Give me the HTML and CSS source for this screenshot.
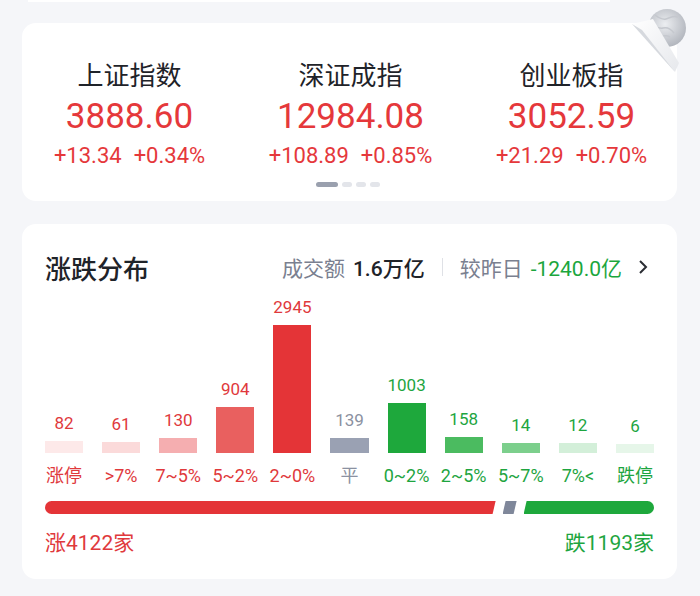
FILE: index.html
```html
<!DOCTYPE html>
<html lang="zh-CN">
<head>
    <meta charset="UTF-8">
    <meta name="viewport" content="width=device-width, initial-scale=1.0">
    <title>行情</title>
    <link rel="stylesheet" href="styles.css">
</head>
<body>
    <div class="top-strip"></div>

    <div class="page">
        <div class="card index-card">
            <svg class="globe" width="75" height="72" viewBox="0 0 75 72">
                <defs>
                    <radialGradient id="g" cx="45%" cy="40%" r="65%">
                        <stop offset="0" stop-color="#eceef1"/>
                        <stop offset="1" stop-color="#aeb2ba"/>
                    </radialGradient>
                    <linearGradient id="p" x1="0" y1="0" x2="1" y2="1">
                        <stop offset="0" stop-color="#ffffff"/>
                        <stop offset="1" stop-color="#e6e8ec"/>
                    </linearGradient>
                </defs>
                <circle cx="42" cy="23" r="19" fill="url(#g)"/>
                <path d="M30 10c4 3 7 5 11 4s7-4 12-2M26 22c5-1 8 2 12 1s8 1 11 5M34 33c3-2 7-3 11-1" stroke="#c5c8ce" stroke-width="1.5" fill="none"/>
                <polygon points="7,19 28,14 54,58 50,67" fill="url(#p)"/>
                <polygon points="7,19 17,25 50,67" fill="#d6d9de"/>
            </svg>
            <div class="index-row">
                <div class="index-item">
                    <div class="index-name">上证指数</div>
                    <div class="index-value">3888.60</div>
                    <div class="index-change"><span>+13.34</span><span>+0.34%</span></div>
                </div>
                <div class="index-item">
                    <div class="index-name">深证成指</div>
                    <div class="index-value">12984.08</div>
                    <div class="index-change"><span>+108.89</span><span>+0.85%</span></div>
                </div>
                <div class="index-item">
                    <div class="index-name">创业板指</div>
                    <div class="index-value">3052.59</div>
                    <div class="index-change"><span>+21.29</span><span>+0.70%</span></div>
                </div>
            </div>
            <div class="dots">
                <span class="dot active"></span>
                <span class="dot"></span>
                <span class="dot"></span>
                <span class="dot"></span>
            </div>
        </div>

        <div class="card dist-card">
            <div class="dist-head">
                <div class="dist-title">涨跌分布</div>
                <div class="dist-meta">
                    <span class="muted">成交额</span>
                    <span class="strong">1.6万亿</span>
                    <span class="sep"></span>
                    <span class="muted">较昨日</span>
                    <span class="down">-1240.0亿</span>
                    <svg class="chevron" width="10" height="16" viewBox="0 0 10 16"><polyline points="2,2 8,8 2,14" fill="none" stroke="#2a2d33" stroke-width="2"/></svg>
                </div>
            </div>

            <div class="chart">
                <div class="col up"><span class="val">82</span><div class="bar b1" style="height:12px"></div><span class="lbl">涨停</span></div>
                <div class="col up"><span class="val">61</span><div class="bar b2" style="height:11px"></div><span class="lbl">&gt;7%</span></div>
                <div class="col up"><span class="val">130</span><div class="bar b3" style="height:15px"></div><span class="lbl">7~5%</span></div>
                <div class="col up"><span class="val">904</span><div class="bar b4" style="height:46px"></div><span class="lbl">5~2%</span></div>
                <div class="col up"><span class="val">2945</span><div class="bar b5" style="height:128px"></div><span class="lbl">2~0%</span></div>
                <div class="col flat"><span class="val">139</span><div class="bar b6" style="height:15px"></div><span class="lbl">平</span></div>
                <div class="col down"><span class="val">1003</span><div class="bar b7" style="height:50px"></div><span class="lbl">0~2%</span></div>
                <div class="col down"><span class="val">158</span><div class="bar b8" style="height:16px"></div><span class="lbl">2~5%</span></div>
                <div class="col down"><span class="val">14</span><div class="bar b9" style="height:10px"></div><span class="lbl">5~7%</span></div>
                <div class="col down"><span class="val">12</span><div class="bar b10" style="height:10px"></div><span class="lbl">7%&lt;</span></div>
                <div class="col down"><span class="val">6</span><div class="bar b11" style="height:9px"></div><span class="lbl">跌停</span></div>
            </div>

            <div class="ratio">
                <div class="seg seg-up" style="flex:4122"></div>
                <div class="seg seg-flat"></div>
                <div class="seg seg-down" style="flex:1193"></div>
            </div>

            <div class="totals">
                <span class="up-text">涨4122家</span>
                <span class="down-text">跌1193家</span>
            </div>
        </div>
    </div>
</body>
</html>
```

FILE: styles.css
```css
body {
    margin: 0;
    background-color: #f5f6f9;
    font-family: Roboto, "Noto Sans CJK SC", sans-serif;
    color: #1f2329;
}
.top-strip {
    height: 2px;
    margin: 0 90px 0 28px;
    background-color: #fff;
}
.page {
    padding: 21px 23px 0 22px;
}
.card {
    background-color: #fff;
    border-radius: 14px;
}
.index-card {
    position: relative;
    height: 178px;
    box-sizing: border-box;
    padding-top: 38px;
}
.globe {
    position: absolute;
    top: -18px;
    right: -23px;
}
.index-row {
    display: grid;
    grid-template-columns: repeat(3, 221px);
    margin-left: -3px;
}
.index-item {
    display: flex;
    flex-direction: column;
    align-items: center;
}
.index-name {
    font-size: 26px;
    line-height: 30px;
    color: #1f2329;
}
.index-value {
    margin-top: 6px;
    font-size: 35px;
    line-height: 40px;
    color: #e5383b;
}
.index-change {
    margin-top: 7px;
    font-size: 22px;
    line-height: 24px;
    color: #e5383b;
    display: flex;
    gap: 12px;
}
.dots {
    display: flex;
    justify-content: center;
    gap: 4px;
    margin-top: 14px;
    padding-right: 4px;
}
.dot {
    width: 10px;
    height: 5px;
    border-radius: 3px;
    background-color: #e3e5ea;
}
.dot.active {
    width: 22px;
    background-color: #9aa0ae;
}
.dist-card {
    margin-top: 23px;
    padding: 27px 23px 23px 23px;
}
.dist-head {
    display: flex;
    justify-content: space-between;
    align-items: center;
    height: 32px;
}
.dist-title {
    font-size: 26px;
    font-weight: 500;
    color: #1f2329;
}
.dist-meta {
    display: flex;
    align-items: center;
    font-size: 21px;
    gap: 8px;
}
.muted {
    color: #7a8090;
}
.strong {
    color: #1f2329;
    font-weight: 500;
}
.down {
    color: #1ba63d;
}
.sep {
    width: 1px;
    height: 18px;
    background-color: #dfe1e6;
    margin: 0 9px;
}
.chevron {
    margin-left: 8px;
    margin-right: 6px;
}
.chart {
    display: grid;
    grid-template-columns: repeat(11, minmax(0, 1fr));
    column-gap: 19px;
    align-items: end;
    margin-top: 14px;
}
.col {
    display: flex;
    flex-direction: column;
    align-items: center;
    font-size: 17px;
}
.val {
    line-height: 20px;
    margin-bottom: 8px;
}
.lbl {
    font-size: 18px;
    line-height: 20px;
    margin-top: 13px;
    white-space: nowrap;
}
.bar {
    width: 100%;
}
.col.up {
    color: #e0393c;
}
.col.flat {
    color: #8b91a1;
}
.col.down {
    color: #1ea53f;
}
.b1 { background-color: #fde9e9; }
.b2 { background-color: #fbdada; }
.b3 { background-color: #f5aeb0; }
.b4 { background-color: #e9605f; }
.b5 { background-color: #e43437; }
.b6 { background-color: #9aa1b3; }
.b7 { background-color: #1ea83c; }
.b8 { background-color: #4bbb60; }
.b9 { background-color: #7ccf8c; }
.b10 { background-color: #d3efd9; }
.b11 { background-color: #e6f6e9; }
.ratio {
    display: flex;
    gap: 7px;
    height: 13px;
    margin-top: 15px;
}
.seg {
    height: 100%;
}
.seg-up {
    background-color: #e43437;
    border-radius: 7px 0 0 7px;
    clip-path: polygon(0 0, 100% 0, calc(100% - 3px) 100%, 0 100%);
}
.seg-flat {
    width: 14px;
    background-color: #7f879a;
    clip-path: polygon(3px 0, 100% 0, calc(100% - 3px) 100%, 0 100%);
}
.seg-down {
    background-color: #1ea83c;
    border-radius: 0 7px 7px 0;
    clip-path: polygon(3px 0, 100% 0, 100% 100%, 0 100%);
}
.totals {
    display: flex;
    justify-content: space-between;
    margin-top: 16px;
    font-size: 21px;
    line-height: 26px;
}
.up-text {
    color: #e0393c;
}
.down-text {
    color: #1ea53f;
}
```
